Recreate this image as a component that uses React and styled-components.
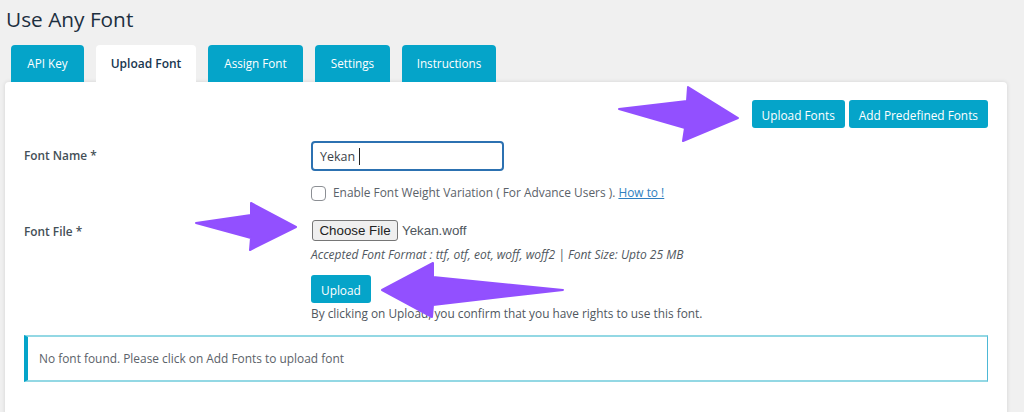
import React from 'react';
import styled, { createGlobalStyle } from 'styled-components';

const GlobalStyle = createGlobalStyle`
  html, body {
    margin: 0;
    padding: 0;
    background: #f0f0f0;
    overflow: hidden;
  }
  body {
    font-family: "Open Sans", "Liberation Sans", sans-serif;
    color: #50575e;
  }
`;

const Page = styled.div`
  position: relative;
  width: 1024px;
  height: 412px;
  overflow: hidden;
  padding: 5px 17px 0 5px;
  box-sizing: border-box;
`;

const Heading = styled.h1`
  margin: 0 0 0 1px;
  font-size: 20.8px;
  line-height: 28px;
  font-weight: 400;
  color: #1d2f3f;
`;

const Tabs = styled.nav`
  display: flex;
  gap: 12px;
  margin: 12px 0 0 6px;
  height: 37px;
`;

const Tab = styled.a`
  display: flex;
  align-items: center;
  justify-content: center;
  width: ${(p) => p.$width}px;
  border-radius: 4px 4px 0 0;
  font-size: ${(p) => (p.$active ? 12 : 11.7)}px;
  font-weight: ${(p) => (p.$active ? 600 : 400)};
  padding-bottom: 1px;
  box-sizing: border-box;
  background: ${(p) => (p.$active ? '#fff' : '#05a4c9')};
  color: ${(p) => (p.$active ? '#17364f' : '#fff')};
`;

const Panel = styled.main`
  height: 340px;
  padding: 18px 19px 0;
  box-sizing: border-box;
  background: #fff;
  border-radius: 4px 4px 0 0;
  box-shadow: 0 0 4px rgba(0, 0, 0, 0.12);
`;

const TopActions = styled.div`
  display: flex;
  justify-content: flex-end;
  gap: 4px;
  margin-bottom: 13px;
`;

const Button = styled.button`
  height: 28px;
  padding: 1px 10px 0;
  border: 0;
  border-radius: 3px;
  background: #05a4c9;
  color: #fff;
  font-family: inherit;
  font-size: 11.85px;
  font-weight: 400;
`;

const FormRow = styled.div`
  display: grid;
  grid-template-columns: 287px 1fr;
`;

const Label = styled.label`
  font-size: 11.85px;
  font-weight: 600;
  color: #444f57;
  padding-top: ${(p) => p.$top}px;
`;

const Field = styled.div`
  display: flex;
  flex-direction: column;
  align-items: flex-start;
`;

const NameInput = styled.div`
  display: flex;
  align-items: center;
  width: 193px;
  height: 30px;
  padding-left: 7px;
  box-sizing: border-box;
  border: 2px solid #2c71b1;
  border-radius: 4px;
  font-size: 12.5px;
  color: #3c434a;
`;

const Caret = styled.span`
  width: 1px;
  height: 17px;
  margin-left: 4px;
  background: #222;
`;

const CheckRow = styled.div`
  display: flex;
  align-items: center;
  gap: 7px;
  height: 15px;
  margin-top: 15px;
  font-size: 11.9px;
  color: #5b6269;
`;

const CheckBox = styled.span`
  width: 15px;
  height: 15px;
  box-sizing: border-box;
  border: 1px solid #8c8f94;
  border-radius: 4px;
  background: #fff;
`;

const CheckText = styled.span`
  margin-top: -3px;
`;

const HelpLink = styled.a`
  color: #2f7fc0;
  text-decoration: underline;
`;

const FileRow = styled.div`
  display: flex;
  align-items: center;
  gap: 4px;
  margin: 19px 0 0 1px;
  font-family: "Liberation Sans", Arial, sans-serif;
  font-size: 13.33px;
  color: #50575e;
`;

const FileButton = styled.span`
  display: flex;
  align-items: center;
  justify-content: center;
  width: 86px;
  height: 21px;
  box-sizing: border-box;
  border: 1px solid #767676;
  border-radius: 3px;
  background: #efefef;
  color: #222;
`;

const Hint = styled.p`
  margin: 6px 0 0;
  font-size: 12px;
  line-height: 16px;
  font-style: italic;
  color: #50575e;
`;

const UploadArea = styled.div`
  margin-top: 12px;
`;

const Note = styled.p`
  margin: 2px 0 0;
  font-size: 11.85px;
  line-height: 16px;
  color: #50575e;
`;

const Notice = styled.div`
  display: flex;
  align-items: center;
  height: 47px;
  margin-top: 14px;
  padding: 0 0 1px 11px;
  box-sizing: border-box;
  border-style: solid;
  border-width: 2px 1px 2px 4px;
  border-color: #93d8e4 #4db8d6 #93d8e4 #05a4c9;
  font-size: 11.9px;
  color: #5b6269;
`;

const Arrows = styled.svg`
  position: absolute;
  inset: 0;
  pointer-events: none;
`;

const Arrow = styled.polygon`
  fill: #9250ff;
  stroke: #9250ff;
  stroke-width: 2;
  stroke-linejoin: round;
`;

const tabs = [
  { label: 'API Key', width: 73 },
  { label: 'Upload Font', width: 100, active: true },
  { label: 'Assign Font', width: 95 },
  { label: 'Settings', width: 75 },
  { label: 'Instructions', width: 94 },
];

const App = () => {
  return (
    <Page>
      <GlobalStyle />
      <Heading>Use Any Font</Heading>
      <Tabs>
        {tabs.map((t) => (
          <Tab key={t.label} $width={t.width} $active={t.active}>
            {t.label}
          </Tab>
        ))}
      </Tabs>
      <Panel>
        <TopActions>
          <Button>Upload Fonts</Button>
          <Button>Add Predefined Fonts</Button>
        </TopActions>
        <FormRow>
          <Label $top={6}>Font Name *</Label>
          <Field>
            <NameInput>
              Yekan
              <Caret />
            </NameInput>
            <CheckRow>
              <CheckBox />
              <CheckText>
                Enable Font Weight Variation ( For Advance Users ). <HelpLink>How to !</HelpLink>
              </CheckText>
            </CheckRow>
          </Field>
        </FormRow>
        <FormRow>
          <Label $top={22}>Font File *</Label>
          <Field>
            <FileRow>
              <FileButton>Choose File</FileButton>
              Yekan.woff
            </FileRow>
            <Hint>Accepted Font Format : ttf, otf, eot, woff, woff2 | Font Size: Upto 25 MB</Hint>
            <UploadArea>
              <Button>Upload</Button>
            </UploadArea>
            <Note>By clicking on Upload, you confirm that you have rights to use this font.</Note>
          </Field>
        </FormRow>
        <Notice>No font found. Please click on Add Fonts to upload font</Notice>
      </Panel>
      <Arrows width="1024" height="412" viewBox="0 0 1024 412">
        <Arrow points="619,109 687,101 688,87 738,118 683,141 685,128" />
        <Arrow points="196,223 251,215 251,203 296,227 250,250 251,238" />
        <Arrow points="382,290 433,263 433,277 563,290 433,305 432,317" />
      </Arrows>
    </Page>
  );
};

export default App;
